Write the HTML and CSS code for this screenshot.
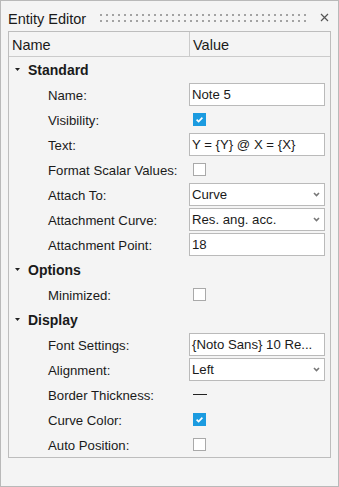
FILE: index.html
```html
<!DOCTYPE html>
<html lang="en">
  <head>
    <meta charset="UTF-8" />
    <title>Entity Editor</title>
    <link rel="stylesheet" href="styles.css">
  </head>
  <body>
    <div class="panel">
      <div class="titlebar">
        <span class="title">Entity Editor</span>
        <span class="grip"></span>
        <svg class="close" width="9" height="9" viewBox="0 0 9 9"><path d="M1 1L8 8M8 1L1 8" stroke="#555" stroke-width="1.2" fill="none"/></svg>
      </div>
      <div class="editor">
        <div class="head">
          <div class="hcell">Name</div>
          <div class="hcell val">Value</div>
        </div>

        <div class="section"><svg class="caret" width="5" height="3" viewBox="0 0 5 3"><path d="M0 0H5L2.5 3Z" fill="#222"/></svg>Standard</div>
        <div class="prop">
          <span class="label">Name:</span>
          <div class="value"><span class="field">Note 5</span></div>
        </div>
        <div class="prop">
          <span class="label">Visibility:</span>
          <div class="value"><span class="check on"><svg width="13" height="13" viewBox="0 0 13 13"><path d="M3.6 6.6L5.6 8.6L9.4 4.6" stroke="#fff" stroke-width="1.6" fill="none"/></svg></span></div>
        </div>
        <div class="prop">
          <span class="label">Text:</span>
          <div class="value"><span class="field">Y = {Y} @ X = {X}</span></div>
        </div>
        <div class="prop">
          <span class="label">Format Scalar Values:</span>
          <div class="value"><span class="check"></span></div>
        </div>
        <div class="prop">
          <span class="label">Attach To:</span>
          <div class="value"><span class="field select">Curve<svg class="arrow" width="7" height="5" viewBox="0 0 7 5"><path d="M1 1L3.5 3.5L6 1" stroke="#777" stroke-width="1.6" fill="none"/></svg></span></div>
        </div>
        <div class="prop">
          <span class="label">Attachment Curve:</span>
          <div class="value"><span class="field select">Res. ang. acc.<svg class="arrow" width="7" height="5" viewBox="0 0 7 5"><path d="M1 1L3.5 3.5L6 1" stroke="#777" stroke-width="1.6" fill="none"/></svg></span></div>
        </div>
        <div class="prop">
          <span class="label">Attachment Point:</span>
          <div class="value"><span class="field">18</span></div>
        </div>

        <div class="section"><svg class="caret" width="5" height="3" viewBox="0 0 5 3"><path d="M0 0H5L2.5 3Z" fill="#222"/></svg>Options</div>
        <div class="prop">
          <span class="label">Minimized:</span>
          <div class="value"><span class="check"></span></div>
        </div>

        <div class="section"><svg class="caret" width="5" height="3" viewBox="0 0 5 3"><path d="M0 0H5L2.5 3Z" fill="#222"/></svg>Display</div>
        <div class="prop">
          <span class="label">Font Settings:</span>
          <div class="value"><span class="field">{Noto Sans} 10 Re...</span></div>
        </div>
        <div class="prop">
          <span class="label">Alignment:</span>
          <div class="value"><span class="field select">Left<svg class="arrow" width="7" height="5" viewBox="0 0 7 5"><path d="M1 1L3.5 3.5L6 1" stroke="#777" stroke-width="1.6" fill="none"/></svg></span></div>
        </div>
        <div class="prop">
          <span class="label">Border Thickness:</span>
          <div class="value"><span class="line"></span></div>
        </div>
        <div class="prop">
          <span class="label">Curve Color:</span>
          <div class="value"><span class="check on"><svg width="13" height="13" viewBox="0 0 13 13"><path d="M3.6 6.6L5.6 8.6L9.4 4.6" stroke="#fff" stroke-width="1.6" fill="none"/></svg></span></div>
        </div>
        <div class="prop">
          <span class="label">Auto Position:</span>
          <div class="value"><span class="check"></span></div>
        </div>
      </div>
    </div>
  </body>
</html>
```

FILE: styles.css
```css
body {
  margin: 0;
  font-family: "Liberation Sans", Arial, sans-serif;
  color: #1a1a1a;
}
.panel {
  width: 339px;
  height: 487px;
  box-sizing: border-box;
  border: 1px solid #b9b9b9;
  background: #f4f4f4;
  padding: 0 7px;
}
.titlebar {
  display: flex;
  align-items: flex-start;
  height: 30px;
}
.title {
  padding-top: 10px;
  font-size: 14.5px;
  line-height: 17px;
}
.grip {
  flex: 1;
  height: 8px;
  margin: 13px 14px 0 14px;
  background-color: #a3a3a3;
  background-image:
    linear-gradient(90deg, transparent 2px, #f4f4f4 2px),
    linear-gradient(180deg, transparent 2px, #f4f4f4 2px);
  background-size: 6px 6px;
}
.close {
  margin: 12px 2px 0 0;
}
.editor {
  border: 1px solid #bdbdbd;
}
.head {
  display: grid;
  grid-template-columns: 180px 1fr;
  height: 24px;
  border-bottom: 1px solid #cbcbcb;
}
.hcell {
  padding: 5px 0 0 3px;
  font-size: 14.5px;
  line-height: 17px;
}
.hcell.val {
  border-left: 1px solid #cbcbcb;
}
.section {
  display: flex;
  align-items: center;
  height: 25px;
  padding-left: 6px;
  font-size: 14px;
  font-weight: bold;
}
.caret {
  margin-right: 8px;
}
.prop {
  display: grid;
  grid-template-columns: 180px 1fr;
  align-items: center;
  height: 25px;
  font-size: 13.2px;
}
.label {
  padding-left: 39px;
  padding-top: 1px;
}
.value {
  display: flex;
  align-items: center;
}
.field {
  display: flex;
  align-items: center;
  justify-content: space-between;
  width: 136px;
  height: 23px;
  box-sizing: border-box;
  border: 1px solid #bababa;
  background: #fff;
  padding: 0 2px;
  white-space: nowrap;
  overflow: hidden;
}
.arrow {
  margin-right: 2px;
}
.check {
  display: block;
  width: 13px;
  height: 13px;
  box-sizing: border-box;
  margin-left: 4px;
  border: 1px solid #a9a9a9;
  background: #fff;
}
.check.on {
  border: none;
  background: #1b9be0;
}
.check svg {
  display: block;
}
.line {
  width: 14px;
  height: 1px;
  margin-left: 4px;
  background: #222;
}
```
